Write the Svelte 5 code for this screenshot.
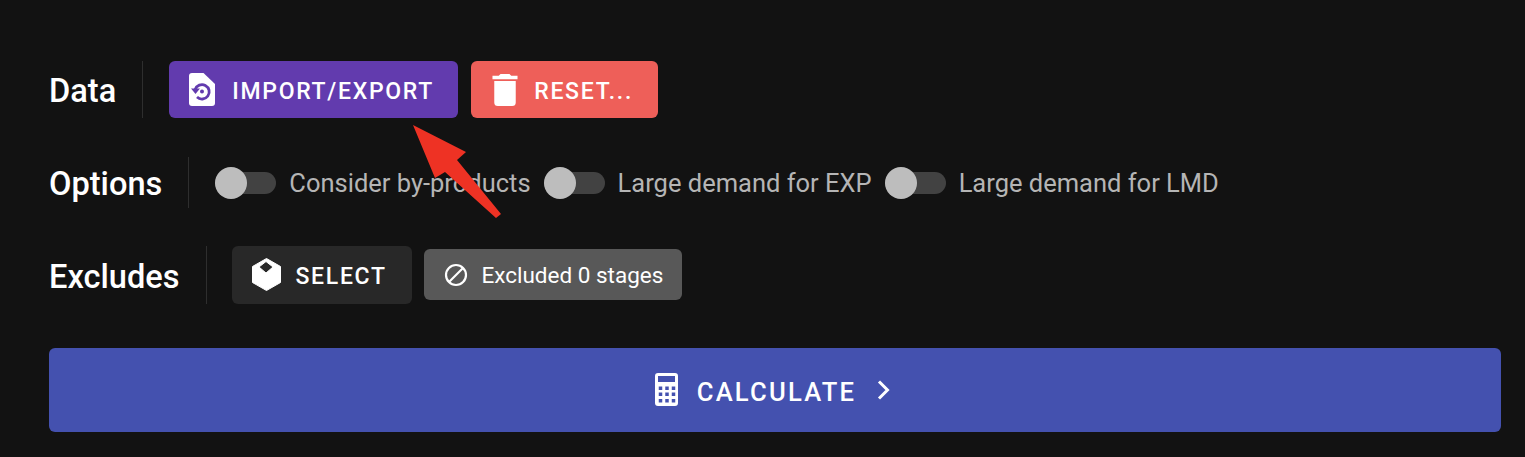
<script>
  let toggles = ["Consider by-products", "Large demand for EXP", "Large demand for LMD"];
</script>

<div class="page">
  <div class="row first">
    <span class="label">Data</span>
    <span class="divider"></span>
    <div class="items">
      <button class="btn purple">
        <svg width="34" height="34" viewBox="0 0 34 34">
          <path fill="#fff" fill-rule="evenodd" d="M6 0h11.500L29 11v19a3 3 0 0 1-3 3H6a3 3 0 0 1-3-3V3a3 3 0 0 1 3-3z" />
          <path fill="none" stroke="#623bae" stroke-width="2.800" d="M9.200 16.500a7.200 7.200 0 1 1 1.800 7.500" />
          <path fill="#623bae" d="M5 15.500h9l-4.500 5.500z" />
          <circle cx="16" cy="18.500" r="2" fill="#623bae" />
        </svg>
        <span>IMPORT/EXPORT</span>
      </button>
      <button class="btn red">
        <svg width="34" height="34" viewBox="2.500 2.500 19 19">
          <path fill="#fff" d="M19 4h-3.500l-1-1h-5l-1 1H5v2h14V4zM6 19a2 2 0 0 0 2 2h8a2 2 0 0 0 2-2V7H6v12z" />
        </svg>
        <span>RESET...</span>
      </button>
    </div>
  </div>

  <div class="row second">
    <span class="label">Options</span>
    <span class="divider"></span>
    <div class="items toggles">
      {#each toggles as t}
        <div class="toggle">
          <span class="track"><span class="knob"></span></span>
          <span class="toggle-text">{t}</span>
        </div>
      {/each}
    </div>
  </div>

  <div class="row third">
    <span class="label">Excludes</span>
    <span class="divider"></span>
    <div class="items">
      <button class="btn dark">
        <svg width="34" height="34" viewBox="0 0 34 34">
          <path fill="#fff" fill-rule="evenodd" stroke="#fff" stroke-width="1" stroke-linejoin="round" d="M17.500 .5L31.500 8.500v16l-14 8-14-8v-16zM17 3.500L10 9l7 6 7-6z" />
        </svg>
        <span>SELECT</span>
      </button>
      <div class="chip">
        <svg width="26" height="26" viewBox="0 0 26 26">
          <circle cx="13" cy="13" r="10" fill="none" stroke="#fff" stroke-width="2.200" />
          <path d="M6 20L20 6" stroke="#fff" stroke-width="2.200" />
        </svg>
        <span>Excluded 0 stages</span>
      </div>
    </div>
  </div>

  <button class="calc">
    <svg width="34" height="34" viewBox="0 0 34 34">
      <path fill="#fff" fill-rule="evenodd" d="M8 0h17a3 3 0 0 1 3 3v27a3 3 0 0 1-3 3H8a3 3 0 0 1-3-3V3a3 3 0 0 1 3-3zM8 3v6h17V3zM8.750 13.500v3.500h3.500v-3.500zM15.250 13.500v3.500h3.500v-3.500zM21.750 13.500v3.500h3.500v-3.500zM8.750 19.500v3.500h3.500v-3.500zM15.250 19.500v3.500h3.500v-3.500zM21.750 19.500v3.500h3.500v-3.500zM8.750 26v3.500h3.500V26zM15.250 26v3.500h3.500V26zM21.750 26v3.500h3.500V26z" />
    </svg>
    <span>CALCULATE</span>
    <svg class="chev" width="27" height="24" viewBox="0 0 27 24">
      <path d="M6 3.500l8.500 8.500-8.500 8.500" fill="none" stroke="#fff" stroke-width="3" />
    </svg>
  </button>

  <svg class="arrow" width="100" height="100" viewBox="410 122 100 100">
    <path fill="#ee3224" d="M413 125L466 152 457 160 501 214 496 218 445 172 435 178z" />
  </svg>
</div>

<style>
  :global(body) {
    margin: 0;
    background: #121212;
  }
  .page {
    position: relative;
    box-sizing: border-box;
    height: 457px;
    padding: 61px 24px 0 49px;
    font-family: Roboto, sans-serif;
    background: #121212;
  }
  .row {
    display: flex;
    align-items: center;
  }
  .first {
    height: 57px;
  }
  .second {
    height: 51px;
    margin-top: 39px;
  }
  .third {
    height: 58px;
    margin-top: 38px;
  }
  .label {
    padding-top: 3px;
    font-size: 32.600px;
    font-weight: 500;
    color: #fff;
  }
  .divider {
    width: 1px;
    align-self: stretch;
    background: #2e2e2e;
    margin: 0 26px;
  }
  .third .divider {
    margin: 0 25px 0 27px;
  }
  .items {
    display: flex;
    align-items: center;
    gap: 12px;
  }
  .btn {
    display: flex;
    align-items: center;
    gap: 12px;
    border: 0;
    border-radius: 6px;
    font-family: inherit;
    font-size: 23px;
    font-weight: 500;
    letter-spacing: 1.700px;
    color: #fff;
    padding: 0 0 0 17px;
  }
  .btn span {
    padding-top: 4px;
  }
  .purple {
    height: 57px;
    width: 289px;
    background: #623bae;
  }
  .red {
    height: 57px;
    width: 187px;
    margin-left: 1px;
    background: #ee5f59;
  }
  .dark {
    height: 58px;
    width: 180px;
    background: #282828;
  }
  .dark span {
    padding-top: 2px;
  }
  .chip {
    display: flex;
    align-items: center;
    gap: 12px;
    box-sizing: border-box;
    height: 51px;
    width: 258px;
    margin-bottom: 1px;
    padding-left: 19px;
    border-radius: 6px;
    background: #585858;
    color: #fff;
    font-size: 22.500px;
    white-space: nowrap;
  }
  .toggles {
    gap: 13px;
  }
  .toggle {
    display: flex;
    align-items: center;
    gap: 13px;
  }
  .track {
    position: relative;
    display: block;
    width: 61px;
    height: 22px;
    border-radius: 11px;
    background: #424242;
  }
  .knob {
    position: absolute;
    left: 0;
    top: -5px;
    width: 32px;
    height: 32px;
    border-radius: 50%;
    background: #bdbdbd;
  }
  .toggle-text {
    font-size: 25.500px;
    color: #b5b5b5;
  }
  .calc {
    display: flex;
    align-items: center;
    justify-content: center;
    gap: 13px;
    width: 100%;
    height: 84px;
    margin-top: 44px;
    border: 0;
    border-radius: 6px;
    background: #4451af;
    color: #fff;
    font-family: inherit;
    font-size: 25.600px;
    font-weight: 500;
    letter-spacing: 2.200px;
  }
  .calc span {
    padding-top: 4px;
  }
  .chev {
    margin-left: 4px;
  }
  .arrow {
    position: absolute;
    left: 410px;
    top: 122px;
  }
</style>
